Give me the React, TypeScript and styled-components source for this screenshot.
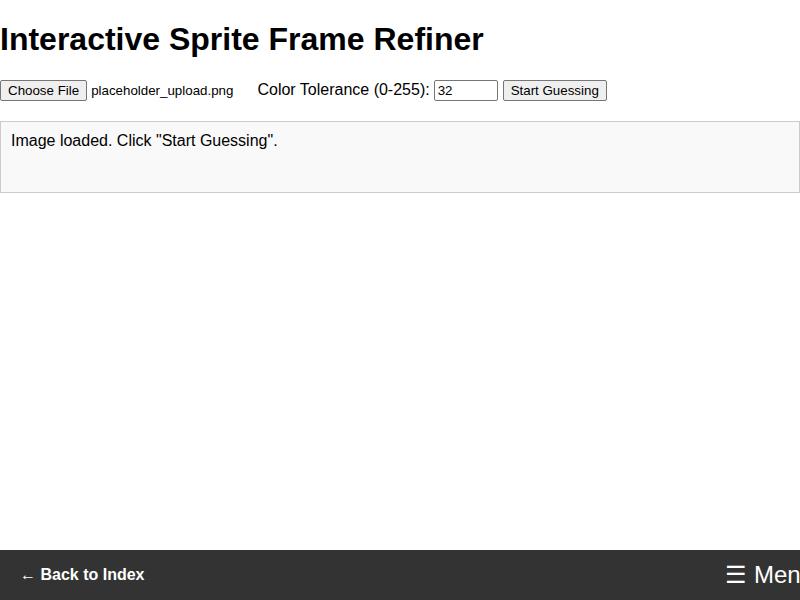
import React from "react";
import styled, { createGlobalStyle } from "styled-components";

const Global = createGlobalStyle`
  html, body { margin: 0; padding: 0; background: #fff; }
  body { font-family: "Liberation Sans", Arial, sans-serif; color: #000; }
`;

const Page = styled.div`
  min-height: 100vh;
`;

const Title = styled.h1`
  font-size: 32px;
  font-weight: bold;
  margin: 21.44px 0;
  line-height: 37px;
`;

const Controls = styled.div`
  display: flex;
  align-items: center;
  height: 21px;
  margin-bottom: 20px;
  font-size: 16px;
`;

const NativeButton = styled.button`
  font-family: "Liberation Sans", Arial, sans-serif;
  font-size: 13.33px;
  height: 21px;
  padding: 1px 7px;
  background: #efefef;
  color: #000;
  border: 1px solid #767676;
  border-radius: 2px;
  box-sizing: border-box;
  line-height: 17px;
`;

const FileName = styled.span`
  font-size: 13.33px;
  margin-left: 4px;
`;

const Label = styled.label`
  margin-left: 24px;
  font-size: 16px;
  line-height: 18px;
`;

const NumberInput = styled.input`
  font-family: "Liberation Sans", Arial, sans-serif;
  font-size: 13.33px;
  width: 64px;
  height: 21px;
  box-sizing: border-box;
  margin-left: 4px;
  padding: 1px 3px;
  border: 1px solid #767676;
  border-radius: 2px;
`;

const StartButton = styled(NativeButton)`
  margin-left: 5px;
`;

const Status = styled.div`
  border: 1px solid #ccc;
  background: #f9f9f9;
  padding: 10px;
  min-height: 50px;
  font-size: 16px;
  line-height: 18px;
`;

const Footer = styled.footer`
  position: fixed;
  left: 0;
  right: 0;
  bottom: 0;
  height: 50px;
  background: #333;
  color: #fff;
  display: flex;
  align-items: center;
  justify-content: space-between;
  padding: 0 0 0 20px;
  overflow: hidden;
  white-space: nowrap;
`;

const BackLink = styled.a`
  color: #fff;
  font-weight: bold;
  font-size: 16px;
  text-decoration: none;
`;

const Menu = styled.span`
  font-size: 24px;
  color: #fff;
  margin-right: -14px;
`;

export default function App() {
  return (
    <Page>
      <Global />
      <Title>Interactive Sprite Frame Refiner</Title>
      <Controls>
        <NativeButton type="button">Choose File</NativeButton>
        <FileName>placeholder_upload.png</FileName>
        <Label htmlFor="tol">Color Tolerance (0-255):</Label>
        <NumberInput id="tol" type="text" defaultValue="32" />
        <StartButton type="button">Start Guessing</StartButton>
      </Controls>
      <Status>Image loaded. Click "Start Guessing".</Status>
      <Footer>
        <BackLink href="#">← Back to Index</BackLink>
        <Menu>☰ Menu</Menu>
      </Footer>
    </Page>
  );
}
